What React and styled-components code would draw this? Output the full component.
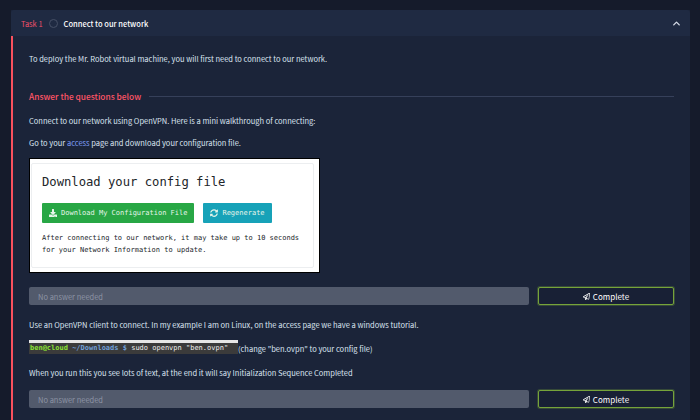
import React from "react";
import styled, { createGlobalStyle } from "styled-components";
import { FaDownload, FaSyncAlt, FaRegPaperPlane } from "react-icons/fa";
import { FiChevronUp } from "react-icons/fi";

const GlobalStyle = createGlobalStyle`
  html, body {
    margin: 0;
    padding: 0;
    background: #151b2b;
    overflow: hidden;
  }
`;

const Page = styled.div`
  width: 700px;
  height: 420px;
  overflow: hidden;
  box-sizing: border-box;
  padding: 10px 10px 0 11px;
  font-family: "Noto Sans CJK SC", "Noto Sans", sans-serif;
  font-size: 7.5px;
  color: #dbe5f2;
`;

const Panel = styled.div`
  background: #1b2439;
  height: 430px;
`;

const TaskHeader = styled.div`
  height: 26px;
  background: #1f2a42;
  border-radius: 3px 3px 0 0;
  display: flex;
  align-items: center;
  padding: 0 8px 0 10px;
`;

const TaskLabel = styled.span`
  color: #f0506a;
`;

const TaskCircle = styled.span`
  width: 7px;
  height: 7px;
  border: 1px solid #465066;
  border-radius: 50%;
  margin: 0 6px 0 6px;
`;

const TaskTitle = styled.span`
  color: #fff;
  flex: 1;
  font-weight: 500;
`;

const Body = styled.div`
  border-left: 2px solid #f9515e;
  padding: 16px 16px 0 16px;
  height: 400px;
`;

const Text = styled.p`
  margin: 0 0 ${(p) => p.$gap || 0}px;
  line-height: 14px;
  white-space: nowrap;
`;

const AnswerHeading = styled.div`
  display: flex;
  align-items: center;
  margin: 23px 0 11px 0;
  color: #ff5566;
  font-size: 8.4px;
  font-weight: 500;
  line-height: 14px;
`;

const HeadingRule = styled.span`
  flex: 1;
  height: 1px;
  background: #36405a;
  margin-left: 8px;
`;

const Link = styled.a`
  color: #7f9ff8;
`;

const ConfigShot = styled.div`
  width: 291px;
  height: 115px;
  box-sizing: border-box;
  background: #fff;
  border: 1px solid #000;
  padding: 4px 5px 4px 1px;
  margin: 8px 0 14px;
`;

const ConfigCard = styled.div`
  height: 100%;
  box-sizing: border-box;
  border: 1px solid #eceef0;
  border-radius: 2px;
  padding: 10px 10px;
  font-family: "DejaVu Sans Mono", monospace;
  color: #212529;
`;

const ConfigTitle = styled.div`
  font-size: 12.2px;
  line-height: 16px;
  margin-bottom: 13px;
`;

const ConfigButtons = styled.div`
  display: flex;
  gap: 9px;
  margin-bottom: 9px;
`;

const ConfigButton = styled.div`
  height: 20px;
  box-sizing: border-box;
  display: flex;
  align-items: center;
  gap: 4px;
  padding: 0 7px;
  border-radius: 1px;
  background: ${(p) => p.$bg};
  color: #e6f5ea;
  font-size: 7px;
`;

const ConfigNote = styled.div`
  font-size: 7px;
  line-height: 12.4px;
  white-space: nowrap;
`;

const AnswerRow = styled.div`
  display: grid;
  grid-template-columns: 500px 136px;
  column-gap: 9px;
  height: 18px;
  margin-bottom: ${(p) => p.$gap || 0}px;
`;

const AnswerInput = styled.div`
  background: #525a6c;
  border-radius: 2px;
  display: flex;
  align-items: center;
  padding-left: 9px;
  color: #8c93a4;
`;

const CompleteButton = styled.div`
  box-sizing: border-box;
  border: 1px solid #76a33a;
  box-shadow: 0 0 0 1px rgba(118, 163, 58, 0.3);
  border-radius: 2px;
  background: #182035;
  color: #fff;
  display: flex;
  align-items: center;
  justify-content: center;
  gap: 3px;
  font-size: 8px;
`;

const TerminalLine = styled.div`
  display: flex;
  align-items: flex-end;
  margin: 8px 0 12px;
  white-space: nowrap;
`;

const Terminal = styled.div`
  width: 209px;
  height: 14px;
  box-sizing: border-box;
  border-top: 3px solid #e6e6e6;
  background: #3b3b3b;
  font-family: "DejaVu Sans Mono", monospace;
  font-size: 7px;
  line-height: 11px;
  padding-left: 1px;
  color: #f0f0f0;
`;

const TermUser = styled.span`
  color: #8ae234;
  font-weight: 700;
`;

const TermPath = styled.span`
  color: #6f9fd8;
  font-weight: 700;
`;

const TerminalCaption = styled.span`
  line-height: 11px;
`;

const Answer = ({ gap }) => (
  <AnswerRow $gap={gap}>
    <AnswerInput>No answer needed</AnswerInput>
    <CompleteButton>
      <FaRegPaperPlane size={7} />
      Complete
    </CompleteButton>
  </AnswerRow>
);

export default function App() {
  return (
    <Page>
      <GlobalStyle />
      <Panel>
        <TaskHeader>
          <TaskLabel>Task 1</TaskLabel>
          <TaskCircle />
          <TaskTitle>Connect to our network</TaskTitle>
          <FiChevronUp size={11} color="#d5dbe6" strokeWidth={3} />
        </TaskHeader>
        <Body>
          <Text>To deploy the Mr. Robot virtual machine, you will first need to connect to our network.</Text>
          <AnswerHeading>
            Answer the questions below
            <HeadingRule />
          </AnswerHeading>
          <Text $gap={8}>Connect to our network using OpenVPN. Here is a mini walkthrough of connecting:</Text>
          <Text>
            Go to your <Link>access</Link> page and download your configuration file.
          </Text>
          <ConfigShot>
            <ConfigCard>
              <ConfigTitle>Download your config file</ConfigTitle>
              <ConfigButtons>
                <ConfigButton $bg="#28a745">
                  <FaDownload size={8} />
                  Download My Configuration File
                </ConfigButton>
                <ConfigButton $bg="#17a2b8">
                  <FaSyncAlt size={8} />
                  Regenerate
                </ConfigButton>
              </ConfigButtons>
              <ConfigNote>
                After connecting to our network, it may take up to 10 seconds
                <br />
                for your Network Information to update.
              </ConfigNote>
            </ConfigCard>
          </ConfigShot>
          <Answer gap={13} />
          <Text>Use an OpenVPN client to connect. In my example I am on Linux, on the access page we have a windows tutorial.</Text>
          <TerminalLine>
            <Terminal>
              <TermUser>ben@cloud</TermUser> <TermPath>~/Downloads $</TermPath> sudo openvpn "ben.ovpn"
            </Terminal>
            <TerminalCaption>(change "ben.ovpn" to your config file)</TerminalCaption>
          </TerminalLine>
          <Text $gap={10}>When you run this you see lots of text, at the end it will say Initialization Sequence Completed</Text>
          <Answer />
        </Body>
      </Panel>
    </Page>
  );
}
